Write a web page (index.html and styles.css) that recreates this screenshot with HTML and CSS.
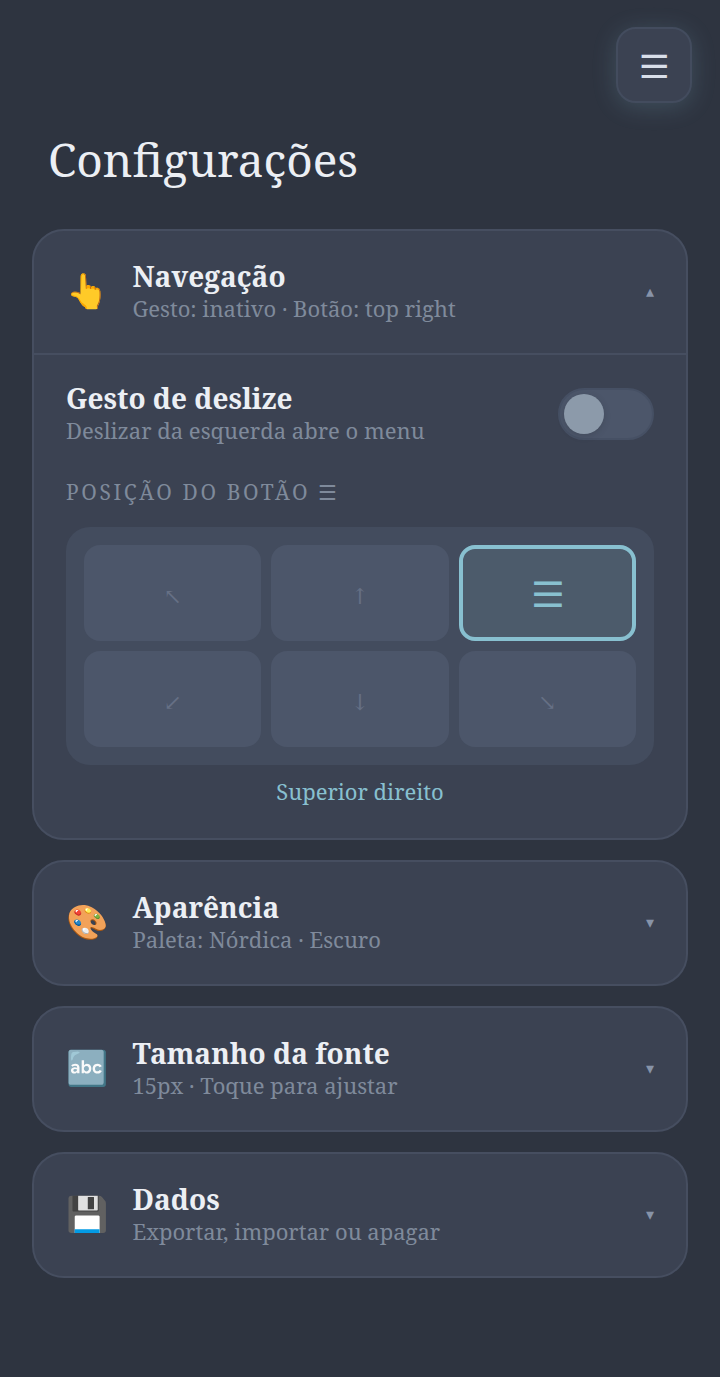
FILE: index.html
```html
<!DOCTYPE html>
<html lang="pt">
<head>
<meta charset="utf-8">
<title>Configurações</title>
<link rel="stylesheet" href="styles.css">
</head>
<body>
<button class="menu-btn"><span class="bars">☰</span></button>
<main class="page">
  <h1 class="page-title">Configurações</h1>
  <section class="card">
    <header class="card-head open">
      <span class="card-icon">👆</span>
      <div class="card-text">
        <div class="card-title">Navegação</div>
        <div class="card-sub">Gesto: inativo · Botão: top right</div>
      </div>
      <span class="chev">▴</span>
    </header>
    <div class="card-body">
      <div class="toggle-row">
        <div class="toggle-text">
          <div class="card-title">Gesto de deslize</div>
          <div class="card-sub">Deslizar da esquerda abre o menu</div>
        </div>
        <div class="toggle"><span class="knob"></span></div>
      </div>
      <div class="section-label">POSIÇÃO DO BOTÃO ☰</div>
      <div class="pos-grid">
        <div class="pos">↖</div>
        <div class="pos">↑</div>
        <div class="pos active"><span class="bars">☰</span></div>
        <div class="pos">↙</div>
        <div class="pos">↓</div>
        <div class="pos">↘</div>
      </div>
      <div class="pos-name">Superior direito</div>
    </div>
  </section>
  <section class="card">
    <header class="card-head">
      <span class="card-icon">🎨</span>
      <div class="card-text">
        <div class="card-title">Aparência</div>
        <div class="card-sub">Paleta: Nórdica · Escuro</div>
      </div>
      <span class="chev">▾</span>
    </header>
  </section>
  <section class="card">
    <header class="card-head">
      <span class="card-icon">🔤</span>
      <div class="card-text">
        <div class="card-title">Tamanho da fonte</div>
        <div class="card-sub">15px · Toque para ajustar</div>
      </div>
      <span class="chev">▾</span>
    </header>
  </section>
  <section class="card">
    <header class="card-head">
      <span class="card-icon">💾</span>
      <div class="card-text">
        <div class="card-title">Dados</div>
        <div class="card-sub">Exportar, importar ou apagar</div>
      </div>
      <span class="chev">▾</span>
    </header>
  </section>
</main>
</body>
</html>
```
FILE: styles.css
```css
* { box-sizing: border-box; }
html, body { margin: 0; padding: 0; }
body {
  background: #2e3440;
  color: #eceff4;
  font-family: "Noto Serif", "Liberation Serif", serif;
  min-height: 1377px;
}
.bars {
  display: inline-block;
  transform: scaleX(1.08);
}
.menu-btn {
  position: absolute;
  top: 27px;
  left: 616px;
  width: 76px;
  height: 76px;
  padding: 3px 0 0;
  border-radius: 20px;
  background: #3b4252;
  border: 2px solid #434c5e;
  color: #d8dee9;
  font-size: 32px;
  font-family: "DejaVu Sans", sans-serif;
  box-shadow: 0 4px 24px rgba(136, 192, 208, 0.2);
}
.page {
  padding: 128px 32px 0;
  display: flex;
  flex-direction: column;
  gap: 20px;
}
.page-title {
  margin: 0 16px 19px;
  font-size: 46px;
  font-weight: 400;
  line-height: 62px;
}
.card {
  background: #3b4252;
  border: 2px solid #464e60;
  border-radius: 32px;
}
.card-head {
  display: flex;
  align-items: center;
  gap: 24px;
  padding: 27px 32px 31px;
}
.card-head.open { border-bottom: 2px solid #464e60; }
.card-icon {
  width: 42.5px;
  font-size: 34px;
  line-height: 1;
}
.card-text { flex: 1; }
.card-title {
  font-size: 28px;
  font-weight: 700;
  line-height: 36px;
}
.card-sub {
  font-size: 22px;
  line-height: 28px;
  color: #7f8a9b;
}
.chev {
  font-size: 16px;
  color: #8793a8;
  margin-top: 2px;
}
.card-body { padding: 25px 32px 30px; }
.toggle-row {
  display: flex;
  align-items: center;
  justify-content: space-between;
}
.toggle {
  width: 96px;
  height: 52px;
  margin-top: 4px;
  border-radius: 26px;
  background: #4c566a;
  border: 2px solid #465064;
  padding: 4px;
}
.knob {
  display: block;
  width: 40px;
  height: 40px;
  border-radius: 50%;
  background: #8c9aaa;
  box-shadow: 0 2px 6px rgba(46, 52, 64, 0.3);
}
.section-label {
  margin: 32px 0 19px;
  font-size: 21px;
  line-height: 32px;
  letter-spacing: 2.6px;
  color: #7f8a9b;
}
.pos-grid {
  display: grid;
  grid-template-columns: repeat(3, 1fr);
  gap: 10px;
  padding: 18px;
  border-radius: 24px;
  background: #434c5e;
}
.pos {
  height: 96px;
  padding-top: 6px;
  border-radius: 16px;
  background: #4c566a;
  color: #667085;
  font-family: "DejaVu Serif", serif;
  font-size: 22px;
  display: flex;
  align-items: center;
  justify-content: center;
}
.pos.active {
  padding-top: 3px;
  border: 4px solid #88c0d0;
  background: #4c5b6b;
  color: #88c0d0;
  font-family: "DejaVu Sans Mono", monospace;
  font-size: 35px;
}
.pos-name {
  margin-top: 9px;
  text-align: center;
  font-size: 22px;
  line-height: 34px;
  color: #88c0d0;
}
```
